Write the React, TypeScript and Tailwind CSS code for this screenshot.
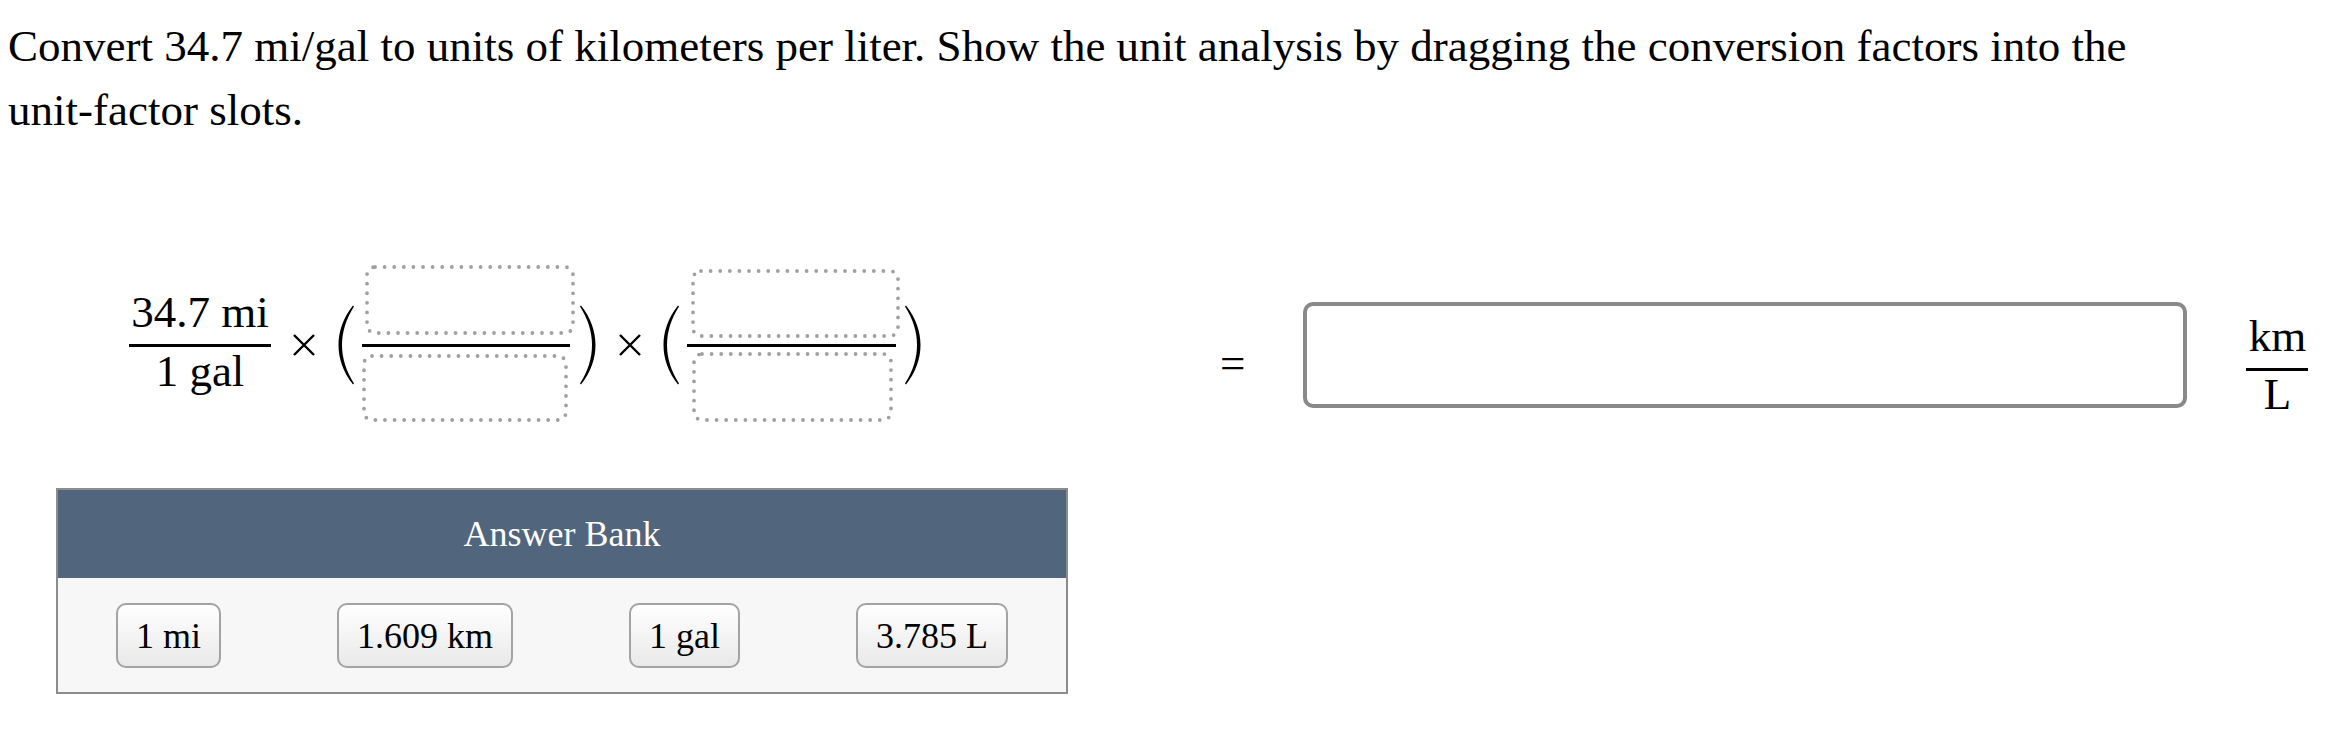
import React from "react";

const serif = "font-['Liberation_Serif','Times_New_Roman',serif]";

// Dotted drop target for a unit factor
function Slot({ className, w, h }: { className: string; w: number; h: number }) {
  return (
    <div className={`relative ${className}`}>
      <svg className="absolute inset-0" width={w} height={h} viewBox={`0 0 ${w} ${h}`}>
        <rect
          x={2}
          y={2}
          width={w - 4}
          height={h - 4}
          rx={8}
          fill="none"
          stroke="#a0a0a0"
          strokeWidth={3.8}
          strokeDasharray="0 9.6"
          strokeLinecap="round"
        />
      </svg>
    </div>
  );
}

function Times({ className }: { className: string }) {
  return (
    <svg className={className} width="24" height="24" viewBox="0 0 24 24">
      <path d="M2 2 L22 22 M22 2 L2 22" stroke="#000" strokeWidth="2.4" fill="none" />
    </svg>
  );
}

function Paren({ className, right }: { className: string; right?: boolean }) {
  return (
    <svg className={className} width="17" height="80" viewBox="0 0 17 80">
      <path
        transform={right ? "translate(17,0) scale(-1,1)" : undefined}
        d="M16 0.5 C6 13 1.5 27 1.5 40 C1.5 53 6 67 16 79.5 L17 78.5 C9 66 5 53 5 40 C5 27 9 14 17 1.5 Z"
        fill="#000"
      />
    </svg>
  );
}

function Chip({ label }: { label: string }) {
  return (
    <div className="h-[65px] px-[18px] flex items-center rounded-[10px] border-2 border-[#a3a3a3] bg-gradient-to-b from-white to-[#e9e9e9] text-[36px] leading-none text-black">
      {label}
    </div>
  );
}

export default function App() {
  return (
    <div className={`w-[2346px] h-[735px] overflow-hidden bg-white text-black ${serif}`}>
      <p className="max-w-[2160px] pt-[14px] pl-[8px] text-[45px] leading-[64px]">
        Convert 34.7 mi/gal to units of kilometers per liter. Show the unit analysis by dragging the conversion factors into the unit-factor slots.
      </p>

      {/* equation line */}
      <div className="mt-[123px] flex items-start text-[45px] leading-[45px]">
        <div className="ml-[129px] mt-[25px] w-[142px] flex flex-col">
          <div className="text-center">34.7 mi</div>
          <div className="mt-[9px] mb-[2px] h-[3px] bg-black" />
          <div className="text-center">1 gal</div>
        </div>

        <Times className="ml-[21px] mt-[68px]" />
        <Paren className="ml-[21px] mt-[40px]" />

        <div className="ml-[8px] w-[213px] flex flex-col">
          <Slot className="ml-[3px] w-[210px] h-[70px]" w={210} h={70} />
          <div className="mt-[9px] mb-[7px] w-[208px] h-[3px] bg-black" />
          <Slot className="w-[206px] h-[68px]" w={206} h={68} />
        </div>

        <Paren className="ml-[5px] mt-[40px]" right />
        <Times className="ml-[21px] mt-[68px]" />
        <Paren className="ml-[20px] mt-[40px]" />

        <div className="ml-[8px] mt-[4px] w-[213px] flex flex-col">
          <Slot className="ml-[4px] w-[209px] h-[69px]" w={209} h={69} />
          <div className="mt-[6px] mb-[5px] w-[209px] h-[3px] bg-black" />
          <Slot className="ml-[5px] w-[201px] h-[70px]" w={201} h={70} />
        </div>

        <Paren className="ml-[5px] mt-[40px]" right />

        <div className="ml-[298px] mt-[76px]">=</div>

        <div className="ml-[58px] mt-[37px] w-[884px] h-[106px] rounded-[10px] border-4 border-[#898989] bg-white" />

        <div className="ml-[59px] mt-[49px] w-[62px] flex flex-col">
          <div className="text-center">km</div>
          <div className="mt-[9px] mb-[1px] h-[3px] bg-black" />
          <div className="text-center">L</div>
        </div>
      </div>

      {/* answer bank */}
      <div className="ml-[56px] mt-[66px] w-[1012px] border-2 border-[#8c8c8c]">
        <div className="h-[88px] flex items-center justify-center bg-[#51657c] text-white text-[36px]">
          Answer Bank
        </div>
        <div className="pt-[25px] pb-[24px] flex justify-around bg-[#f7f7f7]">
          <Chip label="1 mi" />
          <Chip label="1.609 km" />
          <Chip label="1 gal" />
          <Chip label="3.785 L" />
        </div>
      </div>
    </div>
  );
}
